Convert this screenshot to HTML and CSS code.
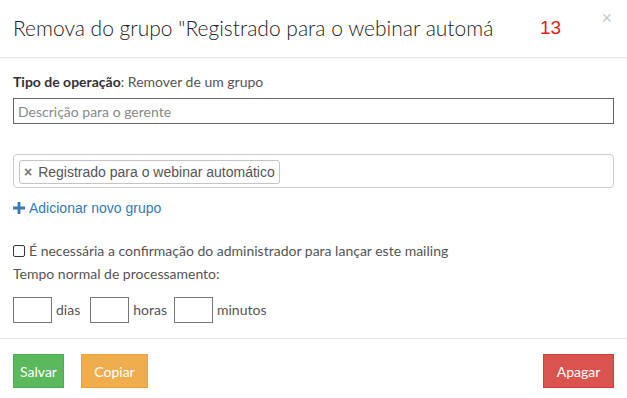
FILE: index.html
```html
<!DOCTYPE html>
<html lang="pt">
<head>
<meta charset="utf-8">
<link rel="stylesheet" href="styles.css">
</head>
<body>
<div class="modal">
  <div class="modal-header">
    <div class="title">Remova do grupo "Registrado para o webinar automático"</div>
    <span class="counter">13</span>
    <span class="close">×</span>
  </div>
  <div class="modal-body">
    <div class="op-line"><b>Tipo de operação</b>: Remover de um grupo</div>
    <input class="desc" type="text" placeholder="Descrição para o gerente">
    <div class="tagbox">
      <span class="tag"><span class="tag-x">×</span>Registrado para o webinar automático</span>
    </div>
    <a class="add-link" href="#"><svg class="plus" viewBox="0 0 12 12" width="12" height="12"><path d="M4.6 0h2.8v4.6H12v2.8H7.4V12H4.6V7.4H0V4.6h4.6z" fill="#337ab7"/></svg>Adicionar novo grupo</a>
    <label class="check-line"><span class="checkbox"></span>É necessária a confirmação do administrador para lançar este mailing</label>
    <div class="time-label">Tempo normal de processamento:</div>
    <div class="time-row">
      <span class="time-group g1"><input class="small-input" type="text"><span class="unit">dias</span></span>
      <span class="time-group g2"><input class="small-input" type="text"><span class="unit">horas</span></span>
      <span class="time-group"><input class="small-input" type="text"><span class="unit">minutos</span></span>
    </div>
  </div>
  <div class="modal-footer">
    <button class="btn btn-green">Salvar</button>
    <button class="btn btn-orange">Copiar</button>
    <span class="spacer"></span>
    <button class="btn btn-red">Apagar</button>
  </div>
</div>
</body>
</html>
```
FILE: styles.css
```css
* { box-sizing: border-box; }
html, body { margin: 0; padding: 0; background: #fff; }
body { font-family: Lato, "Open Sans", sans-serif; font-size: 14px; color: #555; }
.modal { width: 627px; position: relative; }

.modal-header {
  height: 58px;
  border-bottom: 1px solid #e5e5e5;
  display: flex;
  align-items: center;
  padding: 0 0 2px 13px;
}
.title {
  width: 480px;
  white-space: nowrap;
  overflow: hidden;
  font-size: 21px;
  font-weight: 300;
  color: #222;
  line-height: 26px;
}
.counter {
  margin-left: 47px;
  font-family: "Liberation Sans", Arial, sans-serif;
  font-size: 19px;
  color: #e3211b;
  line-height: 26px;
}
.close {
  position: absolute;
  right: 15px;
  top: 8px;
  font-family: "Liberation Sans", Arial, sans-serif;
  font-size: 18px;
  color: #c8c8c8;
}

.modal-body {
  padding: 15px 13px 15px 13px;
  display: flex;
  flex-direction: column;
  align-items: flex-start;
}
.op-line { line-height: 18px; color: #555; }
.op-line b { color: #333; font-weight: 700; }
.desc {
  margin-top: 7px;
  width: 601px;
  height: 26px;
  border: 1px solid #666;
  padding: 0 4px;
  font-family: Lato, sans-serif;
  font-size: 14px;
  color: #555;
  outline: none;
}
.desc::placeholder { color: #888; }

.tagbox {
  margin-top: 30px;
  width: 601px;
  height: 34px;
  border: 1px solid #ccc;
  border-radius: 4px;
  padding: 5px 5px;
  display: flex;
  align-items: flex-start;
}
.tag {
  display: inline-flex;
  align-items: center;
  height: 24px;
  border: 1px solid #c4c4c4;
  border-radius: 3px;
  padding: 0 4px 0 4px;
  font-family: "Liberation Sans", Arial, sans-serif;
  font-size: 14px;
  color: #555;
}
.tag-x {
  font-weight: 700;
  color: #777;
  font-size: 14px;
  margin-right: 6px;
}

.add-link {
  margin-top: 10px;
  display: inline-flex;
  align-items: center;
  font-family: "Liberation Sans", Arial, sans-serif;
  font-size: 14px;
  line-height: 20px;
  color: #337ab7;
  text-decoration: none;
}
.plus { margin-right: 4px; }

.check-line {
  margin-top: 24px;
  display: flex;
  align-items: center;
  line-height: 18px;
}
.checkbox {
  width: 12px;
  height: 12px;
  border: 1px solid #333;
  border-radius: 2px;
  margin-right: 4px;
  background: #fff;
}
.time-label { margin-top: 5px; line-height: 18px; }
.time-row {
  margin-top: 14px;
  display: flex;
  align-items: center;
}
.time-group { display: flex; align-items: center; }
.time-group.g1 { margin-right: 10px; }
.time-group.g2 { margin-right: 7px; }
.small-input {
  width: 39px;
  height: 26px;
  border: 1px solid #777;
  margin: 0 4px 0 0;
  padding: 0;
  outline: none;
}
.unit { line-height: 26px; }

.modal-footer {
  border-top: 1px solid #e5e5e5;
  padding: 15px 13px 11px 13px;
  display: flex;
  align-items: center;
}
.spacer { flex: 1; }
.btn {
  height: 34px;
  padding: 0;
  border: 1px solid;
  font-family: Lato, sans-serif;
  font-size: 14px;
  color: #fff;
  cursor: pointer;
}
.btn-green { background: #5cb85c; border-color: #4cae4c; width: 51px; }
.btn-orange { background: #f0ad4e; border-color: #eea236; width: 67px; margin-left: 17px; }
.btn-red { background: #d9534f; border-color: #d43f3a; width: 71px; }
```
